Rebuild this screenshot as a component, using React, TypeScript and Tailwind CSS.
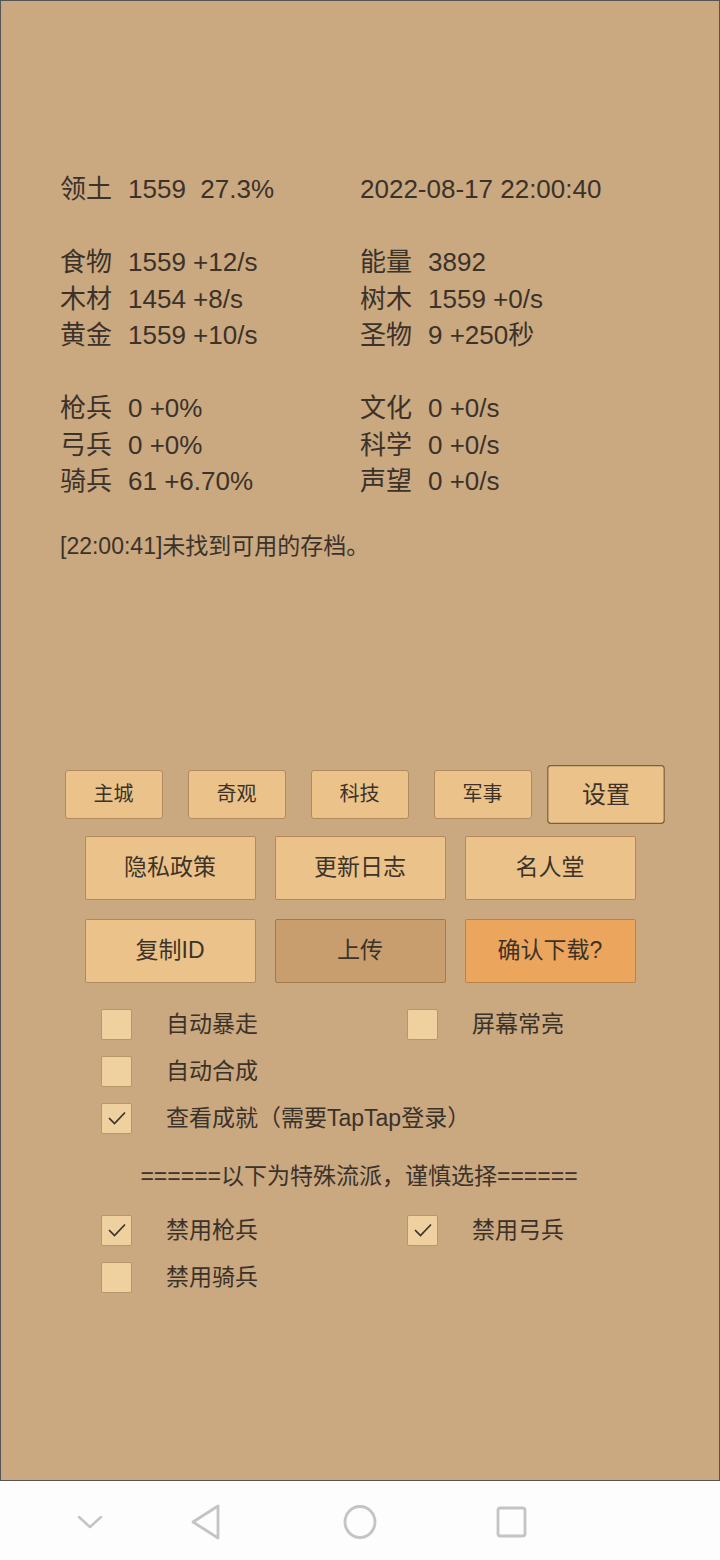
const font = { fontFamily: '"Liberation Sans", "Noto Sans CJK SC", sans-serif' };

function Stat({ label, value }: { label: string; value: string }) {
  return (
    <div className="flex">
      <span className="w-[68px] shrink-0">{label}</span>
      <span className="whitespace-pre">{value}</span>
    </div>
  );
}

function Box({ checked }: { checked?: boolean }) {
  return (
    <div className="w-[31px] h-[31px] shrink-0 bg-[#efd1a0] border border-[#b8966a] rounded-[2px] flex items-center justify-center">
      {checked && (
        <svg width="20" height="16" viewBox="0 0 20 16" fill="none">
          <path d="M2 8 L7.5 13.5 L18 2.5" stroke="#3b322a" strokeWidth="1.7" />
        </svg>
      )}
    </div>
  );
}

function Check({ label, checked }: { label: string; checked?: boolean }) {
  return (
    <div className="flex items-center h-[47px] w-[306px]">
      <Box checked={checked} />
      <span className="ml-[34px] whitespace-nowrap">{label}</span>
    </div>
  );
}

export default function App() {
  const small = ["主城", "奇观", "科技", "军事"];
  return (
    <div className="w-[720px] h-[1560px] flex flex-col text-[#3b322a]" style={font}>
      <div className="h-[1481px] bg-[#caa880] border border-[#555] flex flex-col">
        <div className="pt-[170px] pl-[59px] text-[26px] leading-[36.5px]">
          <div className="grid grid-cols-[300px_300px]">
            <Stat label="领土" value="1559  27.3%" />
            <div>2022-08-17 22:00:40</div>
          </div>
          <div className="grid grid-cols-[300px_300px] mt-[36.5px]">
            <Stat label="食物" value="1559 +12/s" />
            <Stat label="能量" value="3892" />
            <Stat label="木材" value="1454 +8/s" />
            <Stat label="树木" value="1559 +0/s" />
            <Stat label="黄金" value="1559 +10/s" />
            <Stat label="圣物" value="9 +250秒" />
          </div>
          <div className="grid grid-cols-[300px_300px] mt-[36.5px]">
            <Stat label="枪兵" value="0 +0%" />
            <Stat label="文化" value="0 +0/s" />
            <Stat label="弓兵" value="0 +0%" />
            <Stat label="科学" value="0 +0/s" />
            <Stat label="骑兵" value="61 +6.70%" />
            <Stat label="声望" value="0 +0/s" />
          </div>
          <div className="mt-[30px] text-[23px] leading-[32px]">[22:00:41]未找到可用的存档。</div>
        </div>

        <div className="mt-[208px] flex flex-col items-center text-[#3d3328]">
          <div className="flex gap-[25px] ml-[-1px]">
            {small.map((t) => (
              <div
                key={t}
                className="w-[98px] h-[49px] bg-[#ebc38a] border border-[#b08a5c] rounded-[3px] flex items-center justify-center text-[20px]"
              >
                {t}
              </div>
            ))}
            <div className="w-[98px] h-[49px] bg-[#ebc38a] border border-[#7d5e3e] rounded-[3px] flex items-center justify-center text-[20px] scale-[1.2]">
              设置
            </div>
          </div>
          <div className="flex gap-[19px] mt-[17px]">
            {["隐私政策", "更新日志", "名人堂"].map((t) => (
              <div
                key={t}
                className="w-[171px] h-[64px] bg-[#ebc38a] border border-[#b08a5c] rounded-[2px] flex items-center justify-center text-[23px]"
              >
                {t}
              </div>
            ))}
          </div>
          <div className="flex gap-[19px] mt-[19px]">
            <div className="w-[171px] h-[64px] bg-[#ebc38a] border border-[#b08a5c] rounded-[2px] flex items-center justify-center text-[23px]">
              复制ID
            </div>
            <div className="w-[171px] h-[64px] bg-[#c89e6e] border border-[#a07a50] rounded-[2px] flex items-center justify-center text-[23px]">
              上传
            </div>
            <div className="w-[171px] h-[64px] bg-[#eca55d] border border-[#b8844a] rounded-[2px] flex items-center justify-center text-[23px]">
              确认下载?
            </div>
          </div>
        </div>

        <div className="mt-[18px] pl-[100px] text-[23px]">
          <div className="flex">
            <Check label="自动暴走" />
            <Check label="屏幕常亮" />
          </div>
          <Check label="自动合成" />
          <Check label="查看成就（需要TapTap登录）" checked />
          <div className="h-[60px] flex items-center justify-center w-[520px] mt-[5px] ml-[-2px] whitespace-nowrap">
            ======以下为特殊流派，谨慎选择======
          </div>
          <div className="flex">
            <Check label="禁用枪兵" checked />
            <Check label="禁用弓兵" checked />
          </div>
          <Check label="禁用骑兵" />
        </div>
      </div>

      <div className="flex-1 bg-[#fdfdfd] relative">
        <svg className="absolute left-[76px] top-[30px]" width="28" height="20" viewBox="0 0 28 20" fill="none">
          <path d="M3 6 L14 16 L25 6" stroke="#c4c4c4" strokeWidth="2.5" strokeLinecap="round" strokeLinejoin="round" />
        </svg>
        <svg className="absolute left-[188px] top-[22px]" width="36" height="38" viewBox="0 0 36 38" fill="none">
          <path d="M30 3 L30 35 L5 19 Z" stroke="#c4c4c4" strokeWidth="2.8" strokeLinejoin="round" />
        </svg>
        <svg className="absolute left-[341px] top-[22px]" width="38" height="38" viewBox="0 0 38 38" fill="none">
          <ellipse cx="19" cy="19" rx="15" ry="15.5" stroke="#c4c4c4" strokeWidth="2.8" />
        </svg>
        <svg className="absolute left-[494px] top-[23px]" width="36" height="36" viewBox="0 0 36 36" fill="none">
          <rect x="4" y="4" width="27" height="28" rx="2.5" stroke="#c4c4c4" strokeWidth="2.8" />
        </svg>
      </div>
    </div>
  );
}
